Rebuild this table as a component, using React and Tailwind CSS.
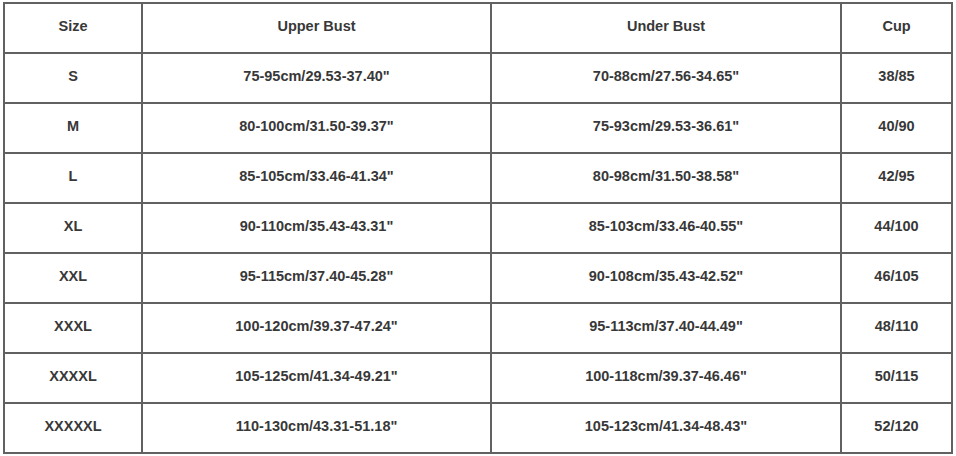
const rows = [
  ['S', '75-95cm/29.53-37.40"', '70-88cm/27.56-34.65"', '38/85'],
  ['M', '80-100cm/31.50-39.37"', '75-93cm/29.53-36.61"', '40/90'],
  ['L', '85-105cm/33.46-41.34"', '80-98cm/31.50-38.58"', '42/95'],
  ['XL', '90-110cm/35.43-43.31"', '85-103cm/33.46-40.55"', '44/100'],
  ['XXL', '95-115cm/37.40-45.28"', '90-108cm/35.43-42.52"', '46/105'],
  ['XXXL', '100-120cm/39.37-47.24"', '95-113cm/37.40-44.49"', '48/110'],
  ['XXXXL', '105-125cm/41.34-49.21"', '100-118cm/39.37-46.46"', '50/115'],
  ['XXXXXL', '110-130cm/43.31-51.18"', '105-123cm/41.34-48.43"', '52/120'],
];

const header = ['Size', 'Upper Bust', 'Under Bust', 'Cup'];

export default function App() {
  const all = [header, ...rows];
  return (
    <div className="h-[456px] w-[956px] bg-white pl-[3px] pt-[2px]">
      <div
        className="grid w-[950px] gap-[2px] bg-[#616161] p-[2px] text-[14.5px] font-bold text-[#383838]"
        style={{ fontFamily: '"Liberation Sans", Arial, sans-serif', gridTemplateColumns: '136px 347px 348px 109px' }}
      >
        {all.map((row, i) =>
          row.map((cell, j) => (
            <div key={`${i}-${j}`} className="flex h-[48px] items-center justify-center bg-white pb-[2px]">
              {cell}
            </div>
          ))
        )}
      </div>
    </div>
  );
}
